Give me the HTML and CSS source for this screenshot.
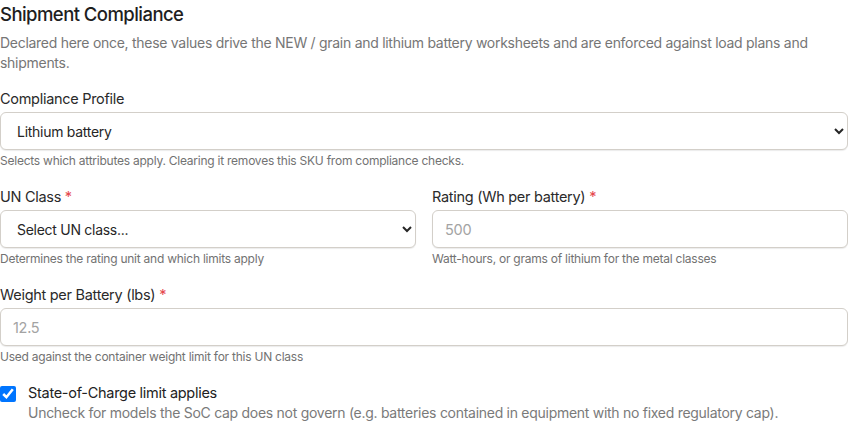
FILE: index.html
```html
<!DOCTYPE html>
<html lang="en">
<head>
<meta charset="utf-8">
<title>Shipment Compliance</title>
<link rel="stylesheet" href="styles.css">
</head>
<body>
<section class="panel">
  <h2 class="title">Shipment Compliance</h2>
  <p class="intro">Declared here once, these values drive the NEW / grain and lithium battery worksheets and are enforced against load plans and shipments.</p>

  <div class="field">
    <label class="label" for="profile">Compliance Profile</label>
    <select id="profile" class="control">
      <option>Lithium battery</option>
    </select>
    <div class="help">Selects which attributes apply. Clearing it removes this SKU from compliance checks.</div>
  </div>

  <div class="row">
    <div class="field">
      <label class="label" for="unclass">UN Class <span class="req">*</span></label>
      <select id="unclass" class="control">
        <option>Select UN class...</option>
      </select>
      <div class="help">Determines the rating unit and which limits apply</div>
    </div>
    <div class="field">
      <label class="label" for="rating">Rating (Wh per battery) <span class="req">*</span></label>
      <input id="rating" class="control" type="text" placeholder="500">
      <div class="help">Watt-hours, or grams of lithium for the metal classes</div>
    </div>
  </div>

  <div class="field">
    <label class="label" for="weight">Weight per Battery (lbs) <span class="req">*</span></label>
    <input id="weight" class="control" type="text" placeholder="12.5">
    <div class="help">Used against the container weight limit for this UN class</div>
  </div>

  <div class="check">
    <input id="soc" class="check-box" type="checkbox" checked>
    <div class="check-text">
      <label class="check-label" for="soc">State-of-Charge limit applies</label>
      <div class="check-desc">Uncheck for models the SoC cap does not govern (e.g. batteries contained in equipment with no fixed regulatory cap).</div>
    </div>
  </div>
</section>
</body>
</html>
```

FILE: styles.css
```css
html, body {
  margin: 0;
  padding: 0;
  background: #ffffff;
}

body {
  font-family: Inter, "Noto Sans", sans-serif;
  color: #262626;
  width: 848px;
}

.panel {
  display: flex;
  flex-direction: column;
}

.title {
  margin: 0;
  font-size: 18.5px;
  line-height: 28px;
  font-weight: 500;
  color: #1e1e1e;
  letter-spacing: -0.03em;
}

.intro {
  margin: 5px 0 16px;
  font-size: 14px;
  line-height: 20px;
  color: #767676;
  letter-spacing: -0.02em;
}

.field {
  display: flex;
  flex-direction: column;
  margin-bottom: 18px;
}

.label {
  font-size: 14.5px;
  line-height: 20px;
  color: #2a2a2a;
  margin-bottom: 3px;
  letter-spacing: -0.02em;
}

.req {
  color: #e5484d;
}

.control {
  box-sizing: border-box;
  height: 38px;
  width: 100%;
  margin: 0;
  border: 1px solid #d3cfc9;
  border-radius: 6px;
  background: #ffffff;
  box-shadow: 0 1px 1px rgba(0, 0, 0, 0.08);
  padding: 0 12px;
  font-family: inherit;
  font-size: 14.5px;
  color: #262626;
  letter-spacing: -0.02em;
}

select.control {
  padding-left: 12px;
  font-size: 14px;
}

input.control::placeholder {
  color: #a3a3a3;
}

.help {
  margin-top: 3px;
  font-size: 12px;
  line-height: 16px;
  color: #727272;
  letter-spacing: -0.02em;
}

.row {
  display: grid;
  grid-template-columns: 1fr 1fr;
  column-gap: 16px;
}

.check {
  display: flex;
  align-items: flex-start;
  gap: 12px;
}

.check-box {
  width: 16px;
  height: 16px;
  margin: 3px 0 0 0;
}

.check-text {
  display: flex;
  flex-direction: column;
}

.check-label {
  font-size: 14.5px;
  line-height: 20px;
  color: #222222;
  letter-spacing: -0.02em;
}

.check-desc {
  font-size: 14px;
  line-height: 20px;
  color: #7a7a7a;
  letter-spacing: -0.02em;
}
```
